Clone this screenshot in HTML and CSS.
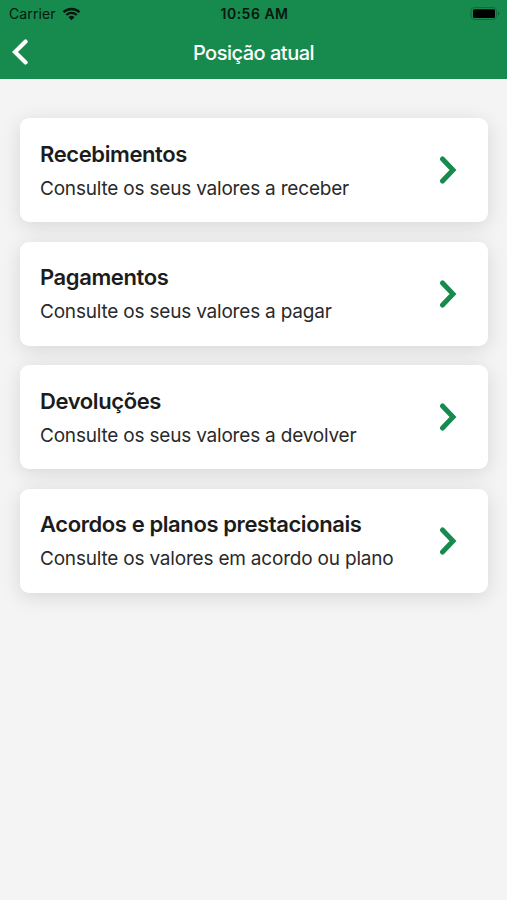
FILE: index.html
```html
<!DOCTYPE html>
<html lang="pt">

<head>
  <title>Posição atual</title>
  <meta charset="utf-8" />
  <meta name="viewport" content="width=device-width, initial-scale=1.0">
  <link rel="stylesheet" href="styles.css">
</head>

<body>
  <header class="header">
    <div class="statusBar">
      <div class="carrier">
        <span class="carrierName">Carrier</span>
        <svg class="wifi" viewBox="0 0 18 14" width="19" height="14">
          <path d="M1 5.2a11.5 11.5 0 0 1 16 0M3.8 8a7.5 7.5 0 0 1 10.4 0" fill="none" stroke="#06180d" stroke-width="2.4" />
          <path d="M9 13.2L6 10.2a4.3 4.3 0 0 1 6 0z" fill="#06180d" />
        </svg>
      </div>
      <div class="time">10:56 AM</div>
      <svg class="battery" viewBox="0 0 30 13" width="30" height="13">
        <rect x="1" y=".5" width="25.5" height="12" rx="3.5" fill="none" stroke="#126b3c" />
        <rect x="3" y="2.2" width="22" height="8.8" rx="1.5" />
        <path d="M28 4.5q2.6 2 0 4z" fill="#0f5f35" />
      </svg>
    </div>
    <div class="navBar">
      <svg class="back" viewBox="0 0 16 26" width="16" height="26">
        <path d="M13.6 2.6L3 13l10.6 10.4" />
      </svg>
      <h1 class="title">Posição atual</h1>
    </div>
  </header>
  <main class="cards">
    <a class="card">
      <div class="cardText">
        <h2 class="name">Recebimentos</h2>
        <p class="info">Consulte os seus valores a receber</p>
      </div>
      <svg class="arrow" viewBox="0 0 18 28" width="18" height="28"><path d="M3.5 3L14 14 3.5 25" /></svg>
    </a>
    <a class="card">
      <div class="cardText">
        <h2 class="name">Pagamentos</h2>
        <p class="info">Consulte os seus valores a pagar</p>
      </div>
      <svg class="arrow" viewBox="0 0 18 28" width="18" height="28"><path d="M3.5 3L14 14 3.5 25" /></svg>
    </a>
    <a class="card">
      <div class="cardText">
        <h2 class="name">Devoluções</h2>
        <p class="info">Consulte os seus valores a devolver</p>
      </div>
      <svg class="arrow" viewBox="0 0 18 28" width="18" height="28"><path d="M3.5 3L14 14 3.5 25" /></svg>
    </a>
    <a class="card">
      <div class="cardText">
        <h2 class="name">Acordos e planos prestacionais</h2>
        <p class="info">Consulte os valores em acordo ou plano</p>
      </div>
      <svg class="arrow" viewBox="0 0 18 28" width="18" height="28"><path d="M3.5 3L14 14 3.5 25" /></svg>
    </a>
  </main>
</body>

</html>
```

FILE: styles.css
```css
html,
body {
  height: 100%;
  margin: 0;
}

body {
  background-color: #f4f4f4;
  color: #1c1c1c;
  font-family: Inter, "Liberation Sans", sans-serif;
}

h1,
h2,
p {
  margin: 0;
}

.header {
  height: 79px;
  background-color: #178a4e;
}

.statusBar {
  display: grid;
  grid-template-columns: 1fr auto 1fr;
  align-items: center;
  height: 27px;
  padding: 0 7px 0 9px;
  color: #06180d;
}

.carrier {
  display: flex;
  align-items: center;
  gap: 6px;
  font-size: 14px;
  letter-spacing: 0.1px;
}

.time {
  font-size: 14px;
  font-weight: 600;
  letter-spacing: 0.5px;
}

.battery {
  justify-self: end;
}

.navBar {
  display: grid;
  grid-template-columns: 16px 1fr 16px;
  align-items: center;
  height: 50px;
  padding: 0 12px;
}

.back path {
  fill: none;
  stroke: white;
  stroke-width: 4.2;
  stroke-linecap: round;
}

.title {
  padding-top: 1px;
  color: white;
  font-size: 20px;
  font-weight: 500;
  letter-spacing: -0.5px;
  text-align: center;
}

.cards {
  display: grid;
  gap: 19.4px;
  padding: 39.4px 19px 40px 20px;
}

.card {
  display: flex;
  align-items: center;
  justify-content: space-between;
  box-sizing: border-box;
  height: 104px;
  padding: 0 31px 0 20px;
  border-radius: 9px;
  background-color: white;
  box-shadow: 0 4px 20px rgba(0, 0, 0, 0.12);
}

.cardText {
  padding-top: 2px;
}

.name {
  font-size: 22px;
  font-weight: 600;
  line-height: 34px;
  letter-spacing: -0.4px;
  white-space: nowrap;
}

.info {
  padding-top: 1px;
  color: #2a2a2a;
  font-size: 19px;
  line-height: 34px;
  letter-spacing: -0.2px;
  white-space: nowrap;
}

.arrow path {
  fill: none;
  stroke: #178a4e;
  stroke-width: 5;
  stroke-linecap: round;
}
```
